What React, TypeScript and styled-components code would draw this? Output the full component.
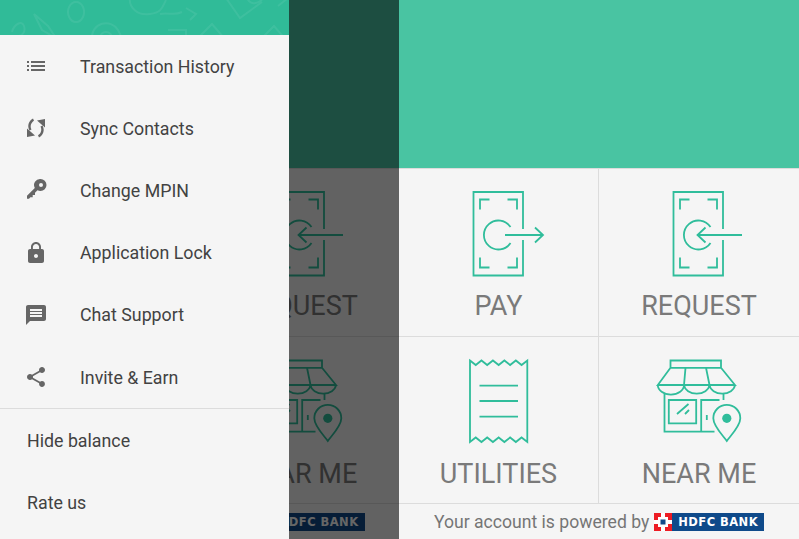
import styled, { createGlobalStyle } from 'styled-components';

const TEAL = '#30bd9b';

const GlobalStyle = createGlobalStyle`
  html, body {
    margin: 0;
    padding: 0;
    background: #f5f5f5;
    overflow: hidden;
  }
  * {
    box-sizing: border-box;
  }
`;

function PayIcon() {
  return (
    <S.Icon viewBox='0 0 100 90'>
      <path d='M74 39V2H24.500v83.500H74V50' />
      <path d='M31 19.500V9.500h9.500M68 19.500V9.500h-9.500M31 67.500v10h9.500M68 67.500v10h-9.500' />
      <path d='M61.500 37a14.500 14.500 0 1 0 0 16' />
      <path d='M56 45h37.500M86 37.500l8 7.500-8 7.500' />
    </S.Icon>
  );
}

function RequestIcon() {
  return (
    <S.Icon viewBox='0 0 100 90'>
      <path d='M74 39V2H24.500v83.500H74V50' />
      <path d='M31 19.500V9.500h9.500M68 19.500V9.500h-9.500M31 67.500v10h9.500M68 67.500v10h-9.500' />
      <path d='M61.500 37a14.500 14.500 0 1 0 0 16' />
      <path d='M49 45h44M56.500 37.500l-8 7.500 8 7.500' />
    </S.Icon>
  );
}

function ReceiptIcon() {
  return (
    <S.Icon viewBox='0 0 100 90'>
      <path d='M21 2.500l5.730 4.500 5.730-4.500 5.730 4.500 5.730-4.500 5.730 4.500 5.730-4.500 5.730 4.500 5.730-4.500 5.730 4.500 5.730-4.500v81.500l-5.730-4.500-5.730 4.500-5.730-4.500-5.730 4.500-5.730-4.500-5.730 4.500-5.730-4.500-5.730 4.500-5.730-4.500-5.730 4.500V2.500z' />
      <path d='M30.500 27.700h38.500M30.500 43h38.500M30.500 58.700h38.500' />
    </S.Icon>
  );
}

function StoreIcon() {
  return (
    <S.Icon viewBox='0 0 100 90'>
      <path d='M21.500 2.500H72v7.300H21.500zM21.500 9.800L8.800 27H86L72 9.800M36.500 9.800L35 27M57 9.800L60.500 27' />
      <path d='M8.800 27a13 9.500 0 0 0 26.200 0a12.800 9.500 0 0 0 25.500 0a12.800 9.500 0 0 0 25.500 0' />
      <path d='M15.500 36v37.700H65.500M19.800 42h27.400v23.300H19.800zM28 56l11.500-10M36 56l4-4' />
      <path d='M52.200 73.700V42H70.500M57.800 57v5M74.500 36v6' />
      <path d='M77.800 83c-3-4.500-13.500-14.500-13.500-22.700a13.500 13.500 0 0 1 27 0C91.300 68.500 80.800 78.500 77.800 83z' />
      <S.PinDot cx='77.800' cy='60.300' r='4.600' />
    </S.Icon>
  );
}

function HdfcLogo() {
  return (
    <S.Logo>
      <S.LogoMark viewBox='0 0 18 18'>
        <rect width='18' height='18' fill='#ed1c24' />
        <path d='M7 0h4v4h3v3h4v4h-4v3h-3v4H7v-4H4v-3H0V7h4V4h3z' fill='#fff' />
        <rect x='6.500' y='6.500' width='5' height='5' fill='#0f4a8a' />
      </S.LogoMark>
      <S.LogoText>HDFC BANK</S.LogoText>
    </S.Logo>
  );
}

const menuIcons = {
  list: 'M3 13h2v-2H3v2zm0 4h2v-2H3v2zm0-8h2V7H3v2zm4 4h14v-2H7v2zm0 4h14v-2H7v2zM7 7v2h14V7H7z',
  sync: 'M9 2.500C4.500 5 3 10 5.500 14.500L7.500 13.500C5.800 10 7 6.500 10 4.700zM3 12.500V21l8-1.500zM15 21.500C19.500 19 21 14 18.500 9.500L16.500 10.500C18.200 14 17 17.500 14 19.300zM21 11.500V3l-8 1.500z',
  key: 'M16.500 1a6 6 0 1 1 0 12a6 6 0 0 1-3-.8L11 14.700V17H8.700v2.300H6.400L5 20.700H3v-3l7.800-7.800a6 6 0 0 1 5.700-8.900zM17 5a2 2 0 1 0 0 4a2 2 0 1 0 0-4z',
  lock: 'M18 8h-1V6c0-2.760-2.240-5-5-5S7 3.240 7 6v2H6c-1.100 0-2 .9-2 2v10c0 1.100.9 2 2 2h12c1.100 0 2-.9 2-2V10c0-1.100-.9-2-2-2zm-6 9c-1.100 0-2-.9-2-2s.9-2 2-2 2 .9 2 2-.9 2-2 2zm3.100-9H8.900V6c0-1.710 1.390-3.100 3.100-3.100 1.710 0 3.100 1.390 3.100 3.100v2z',
  message: 'M20 2H4c-1.100 0-1.990.9-1.990 2L2 22l4-4h14c1.100 0 2-.9 2-2V4c0-1.100-.9-2-2-2zm-2 12H6v-2h12v2zm0-3H6V9h12v2zm0-3H6V6h12v2z',
  share: 'M18 16.080c-.76 0-1.440.3-1.960.77L8.910 12.700c.05-.23.09-.46.09-.7s-.04-.47-.09-.7l7.050-4.110c.54.5 1.250.81 2.040.81 1.660 0 3-1.340 3-3s-1.340-3-3-3-3 1.340-3 3c0 .24.04.47.09.7L8.040 9.810C7.500 9.310 6.790 9 6 9c-1.660 0-3 1.340-3 3s1.340 3 3 3c.79 0 1.500-.31 2.040-.81l7.120 4.160c-.05.21-.08.43-.08.65 0 1.610 1.310 2.920 2.920 2.920 1.610 0 2.920-1.310 2.920-2.920s-1.310-2.920-2.920-2.920z',
};

function MenuGlyph({ d }: { d: string }) {
  return (
    <svg viewBox='0 0 24 24' width='24' height='24' fill='#666'>
      <path d={d} />
    </svg>
  );
}

function Screen({ withDrawer }: { withDrawer?: boolean }) {
  return (
    <S.Screen>
      <S.Hero />
      <S.Grid>
        <S.Tile>
          <PayIcon />
          <S.TileLabel>PAY</S.TileLabel>
        </S.Tile>
        <S.Tile>
          <RequestIcon />
          <S.TileLabel>REQUEST</S.TileLabel>
        </S.Tile>
        <S.Tile>
          <ReceiptIcon />
          <S.TileLabel>UTILITIES</S.TileLabel>
        </S.Tile>
        <S.Tile>
          <StoreIcon />
          <S.TileLabel>NEAR ME</S.TileLabel>
        </S.Tile>
      </S.Grid>
      <S.Footer>
        Your account is powered by
        <HdfcLogo />
      </S.Footer>
      {withDrawer && (
        <>
          <S.Scrim />
          <Drawer />
        </>
      )}
    </S.Screen>
  );
}

function Drawer() {
  return (
    <S.Drawer>
      <S.DrawerHead>
        <S.Doodles viewBox='0 0 289 35'>
          <path d='M12 32c2-8 10-12 12-6s-2 10-6 10M34 14l14 12 8 12-14-8zM76 2a8 10 0 1 0 .1 0M70 -4l12 0M92 38a14 14 0 0 1 26-8l4 8M100 38a6 6 0 0 1 12 0' />
          <path d='M130 -4c-2 12 8 20 20 18s12-6 16-14M160 14c8-2 14 2 22-2M168 30h18v8M186 8l10 6-6 6M200 36l12-12 12 14' />
          <path d='M226 -2l14 20 22-16M246 -4c4 10 10 8 16 4M262 38l12-12 12 14M278 6l10-8' />
        </S.Doodles>
      </S.DrawerHead>
      <S.MenuRow>
        <S.MenuIcon><MenuGlyph d={menuIcons.list} /></S.MenuIcon>
        Transaction History
      </S.MenuRow>
      <S.MenuRow>
        <S.MenuIcon><MenuGlyph d={menuIcons.sync} /></S.MenuIcon>
        Sync Contacts
      </S.MenuRow>
      <S.MenuRow>
        <S.MenuIcon><MenuGlyph d={menuIcons.key} /></S.MenuIcon>
        Change MPIN
      </S.MenuRow>
      <S.MenuRow>
        <S.MenuIcon><MenuGlyph d={menuIcons.lock} /></S.MenuIcon>
        Application Lock
      </S.MenuRow>
      <S.MenuRow>
        <S.MenuIcon><MenuGlyph d={menuIcons.message} /></S.MenuIcon>
        Chat Support
      </S.MenuRow>
      <S.MenuRow>
        <S.MenuIcon><MenuGlyph d={menuIcons.share} /></S.MenuIcon>
        Invite &amp; Earn
      </S.MenuRow>
      <S.Divider />
      <S.PlainRow>Hide balance</S.PlainRow>
      <S.PlainRow>Rate us</S.PlainRow>
    </S.Drawer>
  );
}

export default function App() {
  return (
    <S.Page>
      <GlobalStyle />
      <Screen withDrawer />
      <Screen />
    </S.Page>
  );
}

const S = {
  Page: styled.div`
    width: 799px;
    height: 539px;
    display: grid;
    grid-template-columns: 399px 400px;
    overflow: hidden;
    font-family: Roboto, 'Liberation Sans', sans-serif;
  `,

  Screen: styled.div`
    position: relative;
    height: 539px;
    display: flex;
    flex-direction: column;
    background: #f5f5f5;
    overflow: hidden;
  `,

  Hero: styled.div`
    height: 168px;
    background: #49c4a2;
  `,

  Grid: styled.div`
    display: grid;
    grid-template-columns: 200px 200px;
    grid-template-rows: 168px 167px;
  `,

  Tile: styled.div`
    display: flex;
    flex-direction: column;
    align-items: center;
    padding-top: 21px;
    border-top: 1px solid #dcdcdc;
    &:nth-child(odd) {
      border-right: 1px solid #dcdcdc;
    }
  `,

  Icon: styled.svg`
    width: 100px;
    height: 90px;
    flex: none;
    fill: none;
    stroke: ${TEAL};
    stroke-width: 1.8;
  `,

  PinDot: styled.circle`
    fill: ${TEAL};
    stroke: none;
  `,

  TileLabel: styled.div`
    margin-top: 11px;
    font-size: 27px;
    line-height: 30px;
    color: #7a7a7a;
  `,

  Footer: styled.div`
    flex: 1;
    display: flex;
    align-items: center;
    justify-content: center;
    gap: 5px;
    border-top: 1px solid #dcdcdc;
    font-size: 17.6px;
    color: #757575;
  `,

  Logo: styled.div`
    display: flex;
    align-items: center;
    height: 18px;
    background: #0f4a8a;
  `,

  LogoMark: styled.svg`
    width: 18px;
    height: 18px;
    display: block;
  `,

  LogoText: styled.span`
    padding: 0 6px 0 6px;
    font-family: 'DejaVu Sans', sans-serif;
    font-size: 11.5px;
    font-weight: 700;
    letter-spacing: 0.45px;
    color: #fff;
  `,

  Scrim: styled.div`
    position: absolute;
    inset: 0;
    background: rgba(0, 0, 0, 0.6);
  `,

  Drawer: styled.div`
    position: absolute;
    top: 0;
    bottom: 0;
    left: 0;
    width: 289px;
    background: #f5f5f5;
    color: #424242;
    font-size: 17.8px;
  `,

  DrawerHead: styled.div`
    height: 35px;
    background: #30bb98;
    overflow: hidden;
  `,

  Doodles: styled.svg`
    width: 289px;
    height: 35px;
    display: block;
    fill: none;
    stroke: rgba(255, 255, 255, 0.07);
    stroke-width: 2;
  `,

  MenuRow: styled.div`
    height: 62.2px;
    display: flex;
    align-items: center;
  `,

  MenuIcon: styled.div`
    width: 80px;
    padding-left: 24px;
    display: flex;
    align-items: center;
  `,

  Divider: styled.div`
    height: 1px;
    background: #dcdcdc;
  `,

  PlainRow: styled.div`
    height: 62.2px;
    display: flex;
    align-items: center;
    padding-left: 27px;
  `,
};
